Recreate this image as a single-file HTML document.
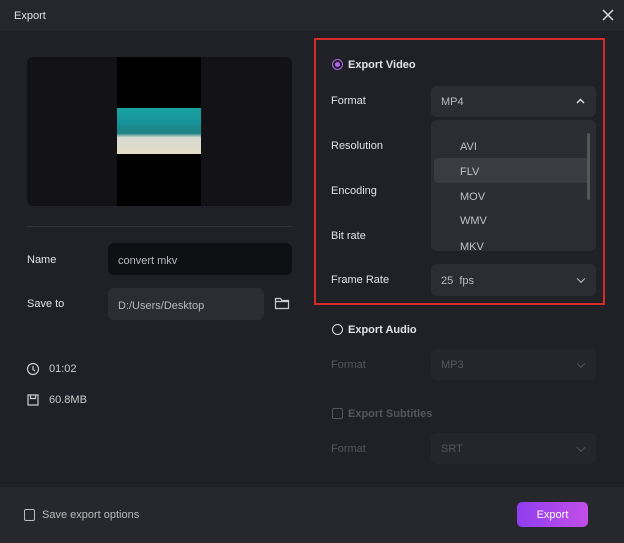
<!DOCTYPE html>
<html><head><meta charset="utf-8"><style>
*{margin:0;padding:0;box-sizing:border-box}
body{width:624px;height:543px;background:#202127;font-family:"Liberation Sans",sans-serif;font-size:11px;color:#d9d9de;position:relative;overflow:hidden}
.a{position:absolute}
.lbl{position:absolute;font-size:11px;color:#e2e2e6}
.sel{position:absolute;background:#2c2d33;border-radius:6px;color:#b8b8be;padding-left:10px;padding-top:2px;font-size:11px}
.dim{color:#55565c}
.chev{position:absolute;right:12px;top:50%;width:6px;height:6px;border-right:1.5px solid #ccc;border-bottom:1.5px solid #ccc;transform:translateY(-70%) rotate(45deg)}
</style></head><body>
<div class="a" style="left:0;top:0;width:624px;height:31px;background:#26272d"></div>
<div class="lbl" style="left:14px;top:10px;font-size:11px">Export</div>
<svg class="a" style="left:602px;top:9px" width="12" height="12"><path d="M1 1L11 11M11 1L1 11" stroke="#ddd" stroke-width="1.5"/></svg>

<div class="a" style="left:27px;top:57px;width:265px;height:149px;background:#131317;border-radius:6px"></div>
<div class="a" style="left:117px;top:57px;width:84px;height:149px;background:#000"></div>
<div class="a" style="left:117px;top:108px;width:84px;height:46px;background:linear-gradient(#1aa3a3 0%,#16959a 30%,#1f8084 55%,#d6dad0 64%,#e3dcc6 100%)"></div>
<div class="a" style="left:27px;top:226px;width:265px;height:1px;background:#33343a"></div>

<div class="lbl" style="left:27px;top:254px">Name</div>
<div class="sel" style="left:108px;top:243px;width:184px;height:32px;background:#0f1014;line-height:32px">convert mkv</div>
<div class="lbl" style="left:27px;top:298px">Save to</div>
<div class="sel" style="left:108px;top:288px;width:156px;height:32px;line-height:32px">D:/Users/Desktop</div>
<svg class="a" style="left:274px;top:296px" width="16" height="14"><path d="M1.5 2.5h5l1.5 2h6.5v8h-13z M1.5 5.5h13" fill="none" stroke="#ccc" stroke-width="1.2"/></svg>
<svg class="a" style="left:26px;top:362px" width="14" height="14"><circle cx="7" cy="7" r="5.5" fill="none" stroke="#ccc" stroke-width="1.2"/><path d="M7 4v3.5l2 1.5" fill="none" stroke="#ccc" stroke-width="1.2"/></svg>
<div class="lbl" style="left:49px;top:363px;color:#ccc">01:02</div>
<svg class="a" style="left:26px;top:393px" width="14" height="14"><path d="M2 2h10v10h-10z M4.5 2v3.5h5V2" fill="none" stroke="#ccc" stroke-width="1.2"/></svg>
<div class="lbl" style="left:49px;top:394px;color:#ccc">60.8MB</div>

<div class="a" style="left:314px;top:38px;width:291px;height:267px;border:2px solid #d52a26"></div>
<div class="a" style="left:332px;top:59px;width:11px;height:11px;border-radius:50%;border:1.5px solid #b463e8"><div style="margin:1.5px;width:5px;height:5px;border-radius:50%;background:#b463e8"></div></div>
<div class="lbl" style="left:348px;top:59px;font-weight:bold">Export Video</div>
<div class="lbl" style="left:331px;top:95px">Format</div>
<div class="sel" style="left:431px;top:86px;width:165px;height:31px;line-height:29px">MP4<svg class="a" style="right:11px;top:12px" width="9" height="6"><path d="M1 5L4.5 1.5L8 5" fill="none" stroke="#ddd" stroke-width="1.5"/></svg></div>
<div class="lbl" style="left:331px;top:140px">Resolution</div>
<div class="lbl" style="left:331px;top:185px">Encoding</div>
<div class="lbl" style="left:331px;top:230px">Bit rate</div>
<div class="a" style="left:431px;top:120px;width:165px;height:131px;background:#2c2d33;border-radius:6px;overflow:hidden;color:#c0c0c6">
<div class="a" style="left:3px;top:38px;width:156px;height:25px;background:#3b3c42;border-radius:4px"></div>
<div class="a" style="left:29px;top:21px">AVI</div>
<div class="a" style="left:29px;top:46px">FLV</div>
<div class="a" style="left:29px;top:71px">MOV</div>
<div class="a" style="left:29px;top:95px">WMV</div>
<div class="a" style="left:29px;top:121px">MKV</div>
<div class="a" style="left:156px;top:13px;width:3px;height:67px;background:#555;border-radius:2px"></div>
</div>
<div class="lbl" style="left:331px;top:274px">Frame Rate</div>
<div class="sel" style="left:431px;top:264px;width:165px;height:32px;line-height:30px">25&nbsp; fps<span class="chev"></span></div>

<div class="a" style="left:332px;top:324px;width:11px;height:11px;border-radius:50%;border:1.5px solid #ddd"></div>
<div class="lbl" style="left:348px;top:324px;font-weight:bold">Export Audio</div>
<div class="lbl dim" style="left:331px;top:359px">Format</div>
<div class="sel dim" style="left:431px;top:349px;width:165px;height:31px;line-height:29px;background:#25262c;color:#55565c">MP3<span class="chev" style="border-color:#55565c"></span></div>
<div class="a" style="left:332px;top:408px;width:11px;height:11px;border-radius:2px;border:1.2px solid #55565c"></div>
<div class="lbl dim" style="left:348px;top:408px;font-weight:bold">Export Subtitles</div>
<div class="lbl dim" style="left:331px;top:443px">Format</div>
<div class="sel dim" style="left:431px;top:433px;width:165px;height:31px;line-height:29px;background:#25262c;color:#55565c">SRT<span class="chev" style="border-color:#55565c"></span></div>

<div class="a" style="left:0;top:487px;width:624px;height:56px;background:#27282e"></div>
<div class="a" style="left:24px;top:509px;width:11px;height:12px;border-radius:2px;border:1.2px solid #bbb"></div>
<div class="lbl" style="left:42px;top:509px;color:#bbb">Save export options</div>
<div class="a" style="left:517px;top:502px;width:71px;height:25px;border-radius:5px;background:linear-gradient(90deg,#8f3df0,#c24fe6);color:#fff;text-align:center;line-height:26px">Export</div>
</body></html>
